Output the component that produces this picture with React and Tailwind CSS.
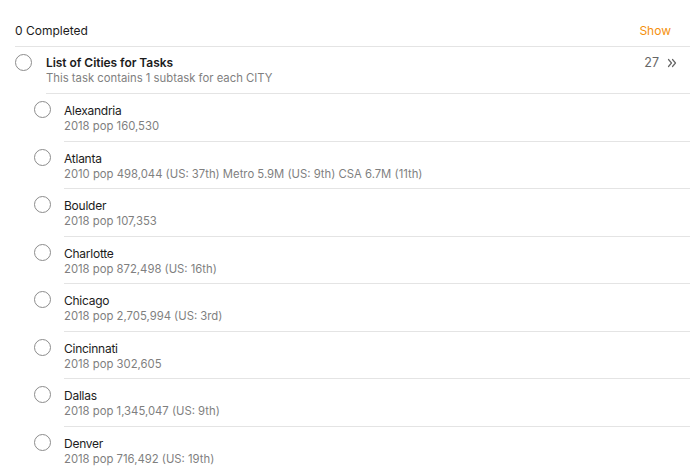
import React from 'react';

const cities = [
    { name: 'Alexandria', note: '2018 pop 160,530' },
    { name: 'Atlanta', note: '2010 pop 498,044 (US: 37th) Metro 5.9M (US: 9th) CSA 6.7M (11th)' },
    { name: 'Boulder', note: '2018 pop 107,353' },
    { name: 'Charlotte', note: '2018 pop 872,498 (US: 16th)' },
    { name: 'Chicago', note: '2018 pop 2,705,994 (US: 3rd)' },
    { name: 'Cincinnati', note: '2018 pop 302,605' },
    { name: 'Dallas', note: '2018 pop 1,345,047 (US: 9th)' },
    { name: 'Denver', note: '2018 pop 716,492 (US: 19th)' },
];

function Circle() {
    return <div className="w-[17px] h-[17px] rounded-full border border-[#8c8c8c] shrink-0 mt-[7px]" />;
}

function App() {
    return (
        <div className="w-[690px] h-[469px] overflow-hidden bg-white pl-[15px] font-['Inter','Liberation_Sans',sans-serif] text-[#1c1c1c]">
            <div className="h-[47px] flex items-end justify-between pb-[7px] pr-[19px] border-b border-[#e4e4e4]">
                <span className="text-[12px] leading-[16px]">0 Completed</span>
                <span className="text-[12px] leading-[16px] text-[#f5900c]">Show</span>
            </div>

            <div className="flex">
                <Circle />
                <div className="ml-[14px] flex-1 flex justify-between pt-[8px] pb-[7px] border-b border-[#e4e4e4]">
                    <div>
                        <div className="text-[12px] leading-[16px] font-semibold tracking-[-0.05px]">List of Cities for Tasks</div>
                        <div className="text-[11.3px] leading-[15px] text-[#7f7f7f]">This task contains 1 subtask for each CITY</div>
                    </div>
                    <div className="flex items-start gap-[8px] pr-[13px]">
                        <span className="text-[12.5px] leading-[16px] text-[#666]">27</span>
                        <svg width="10" height="10" viewBox="0 0 10 10" className="mt-[3px]" fill="none" stroke="#666" strokeWidth="1.2" strokeLinecap="round" strokeLinejoin="round">
                            <path d="M1.5 1.5 L4.5 5 L1.5 8.5" />
                            <path d="M5.5 1.5 L8.5 5 L5.5 8.5" />
                        </svg>
                    </div>
                </div>
            </div>

            {cities.map((c) => (
                <div key={c.name} className="flex pl-[19px]">
                    <Circle />
                    <div className="ml-[13px] flex-1 pt-[9px] pb-[6.5px] border-b border-[#e4e4e4]">
                        <div className="text-[12px] leading-[16px] tracking-[-0.25px]">{c.name}</div>
                        <div className="text-[11.3px] leading-[15px] text-[#7f7f7f]">{c.note}</div>
                    </div>
                </div>
            ))}
        </div>
    );
}

export default App;
